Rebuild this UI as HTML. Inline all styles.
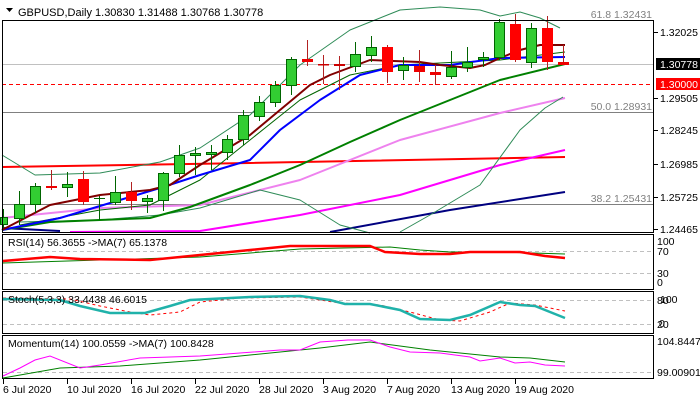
<!DOCTYPE html>
<html><head><meta charset="utf-8"><style>
html,body{margin:0;padding:0;background:#fff;width:700px;height:400px;overflow:hidden}
svg{display:block;font-family:"Liberation Sans",sans-serif;font-size:11px}
</style></head><body>
<svg width="700" height="400" viewBox="0 0 700 400" xmlns="http://www.w3.org/2000/svg">
<rect width="700" height="400" fill="#fff"/>
<path d="M6 8 L13 8 L9.5 12 Z" fill="#000"/>
<text x="18" y="16" fill="#000">GBPUSD,Daily  1.30830 1.31488 1.30768 1.30778</text>
<line x1="2" y1="20.5" x2="654" y2="20.5" fill="none" stroke="#808080"/>
<line x1="2" y1="64.5" x2="654" y2="64.5" stroke="#c0c0c0"/>
<line x1="2" y1="84.5" x2="654" y2="84.5" stroke="#ff0000" stroke-dasharray="4,3"/>
<line x1="2" y1="112.5" x2="654" y2="112.5" stroke="#808080"/>
<line x1="2" y1="204.5" x2="654" y2="204.5" stroke="#808080"/>
<g fill="#808080" font-size="10.5">
<text x="652" y="18" text-anchor="end">61.8 1.32431</text>
<text x="652" y="110" text-anchor="end">50.0 1.28931</text>
<text x="652" y="202" text-anchor="end">38.2 1.25431</text>
</g>
<g fill="none" stroke-linejoin="round">
<polyline stroke="#ff0000" stroke-width="2" points="2,167 250,163 565,157"/>
<polyline stroke="#000080" stroke-width="2" points="2,228 60,231"/>
<polyline stroke="#000080" stroke-width="2" points="330,232 450,210 565,192"/>
<polyline stroke="#ff00ff" stroke-width="2" points="70,232 200,231 300,215 400,195 500,165 565,150"/>
<polyline stroke="#ee82ee" stroke-width="2" points="2,218 100,208 200,205 300,180 400,140 500,113 565,98"/>
<polyline stroke="#2e8b57" stroke-width="1" points="2,155 35,175 100,173 160,162 200,148 250,115 300,65 350,30 400,10 440,7 480,10 500,16 520,12 540,18 560,28"/>
<polyline stroke="#2e8b57" stroke-width="1" points="20,222 100,220 160,215 200,208 260,190 300,200 340,225 370,233"/>
<polyline stroke="#2e8b57" stroke-width="1" points="400,232 430,215 480,185 520,130 545,108 563,97"/>
<polyline stroke="#008000" stroke-width="2" points="2,230 50,222 150,218 190,207 250,185 300,165 350,142 400,120 450,100 500,80 565,64"/>
<polyline stroke="#006400" stroke-width="1" points="20,225 100,210 150,205 200,180 250,140 300,100 350,75 400,65 500,60 565,52"/>
<polyline stroke="#0000ff" stroke-width="2" points="2,230 60,218 120,200 160,188 200,175 250,160 280,130 320,100 360,75 400,65 450,65 500,58 565,57"/>
<polyline stroke="#800000" stroke-width="2" points="2,230 50,205 100,195 150,190 170,185 200,165 250,135 280,110 310,85 330,75 370,60 420,62 440,65 470,68 485,65 500,58 520,50 540,45 565,45"/>
</g>
<g stroke="#006400" stroke-width="1">
<line x1="3.5" y1="209" x2="3.5" y2="228"/><rect x="0.5" y="217.5" width="7" height="7" fill="#32cd32"/>
<line x1="19.5" y1="191" x2="19.5" y2="225"/><rect x="14.5" y="204.5" width="10" height="14" fill="#32cd32"/>
<line x1="35.5" y1="183" x2="35.5" y2="213"/><rect x="30.5" y="186.5" width="10" height="18" fill="#32cd32"/>
<line x1="67.5" y1="172" x2="67.5" y2="197"/><rect x="62.5" y="184.5" width="10" height="3" fill="#32cd32"/>
<line x1="99.5" y1="196" x2="99.5" y2="220"/><line x1="94" y1="198.5" x2="105" y2="198.5"/>
<line x1="115.5" y1="176" x2="115.5" y2="205"/><rect x="110.5" y="192.5" width="10" height="10" fill="#32cd32"/>
<line x1="147.5" y1="195" x2="147.5" y2="213"/><rect x="142.5" y="198.5" width="10" height="3" fill="#32cd32"/>
<line x1="163.5" y1="172" x2="163.5" y2="211"/><rect x="158.5" y="173.5" width="10" height="27" fill="#32cd32"/>
<line x1="179.5" y1="145" x2="179.5" y2="177"/><rect x="174.5" y="155.5" width="10" height="18" fill="#32cd32"/>
<line x1="195.5" y1="147" x2="195.5" y2="175"/><rect x="190.5" y="153.5" width="10" height="2" fill="#32cd32"/>
<line x1="211.5" y1="145" x2="211.5" y2="170"/><rect x="206.5" y="152.5" width="10" height="2" fill="#32cd32"/>
<line x1="227.5" y1="135" x2="227.5" y2="160"/><rect x="222.5" y="139.5" width="10" height="13" fill="#32cd32"/>
<line x1="243.5" y1="110" x2="243.5" y2="145"/><rect x="238.5" y="115.5" width="10" height="24" fill="#32cd32"/>
<line x1="259.5" y1="96" x2="259.5" y2="121"/><rect x="254.5" y="102.5" width="10" height="14" fill="#32cd32"/>
<line x1="275.5" y1="81" x2="275.5" y2="107"/><rect x="270.5" y="85.5" width="10" height="17" fill="#32cd32"/>
<line x1="291.5" y1="57" x2="291.5" y2="95"/><rect x="286.5" y="59.5" width="10" height="26" fill="#32cd32"/>
<line x1="355.5" y1="42" x2="355.5" y2="72"/><rect x="350.5" y="54.5" width="10" height="12" fill="#32cd32"/>
<line x1="371.5" y1="36" x2="371.5" y2="62"/><rect x="366.5" y="47.5" width="10" height="8" fill="#32cd32"/>
<line x1="403.5" y1="57" x2="403.5" y2="80"/><rect x="398.5" y="65.5" width="10" height="5" fill="#32cd32"/>
<line x1="451.5" y1="51" x2="451.5" y2="79"/><rect x="446.5" y="67.5" width="10" height="9" fill="#32cd32"/>
<line x1="467.5" y1="47" x2="467.5" y2="72"/><rect x="462.5" y="62.5" width="10" height="5" fill="#32cd32"/>
<line x1="483.5" y1="52" x2="483.5" y2="67"/><rect x="478.5" y="57.5" width="10" height="2" fill="#32cd32"/>
<line x1="499.5" y1="19" x2="499.5" y2="60"/><rect x="494.5" y="22.5" width="10" height="35" fill="#32cd32"/>
<line x1="531.5" y1="23" x2="531.5" y2="68"/><rect x="526.5" y="28.5" width="10" height="34" fill="#32cd32"/>
</g>
<g stroke="#b22222" stroke-width="1">
<line x1="51.5" y1="170" x2="51.5" y2="190"/><rect x="46" y="186" width="11" height="2" fill="#e00" stroke="none"/>
<line x1="83.5" y1="171" x2="83.5" y2="205"/><rect x="78" y="179" width="11" height="23" fill="#f00" stroke="none"/>
<line x1="131.5" y1="182" x2="131.5" y2="210"/><rect x="126" y="192" width="11" height="9" fill="#f00" stroke="none"/>
<line x1="307.5" y1="40" x2="307.5" y2="66"/><rect x="302" y="59" width="11" height="3" fill="#e00" stroke="none"/>
<line x1="323.5" y1="55" x2="323.5" y2="84"/><rect x="318" y="64" width="11" height="1.5" fill="#c00" stroke="none"/>
<line x1="339.5" y1="56" x2="339.5" y2="90"/><rect x="334" y="64" width="11" height="2" fill="#c00" stroke="none"/>
<line x1="387.5" y1="45" x2="387.5" y2="83"/><rect x="382" y="47" width="11" height="25" fill="#f00" stroke="none"/>
<line x1="419.5" y1="50" x2="419.5" y2="82"/><rect x="414" y="66" width="11" height="6" fill="#e00" stroke="none"/>
<line x1="435.5" y1="65" x2="435.5" y2="85"/><rect x="430" y="72" width="11" height="3" fill="#e00" stroke="none"/>
<line x1="515.5" y1="14" x2="515.5" y2="62"/><rect x="510" y="24" width="11" height="36" fill="#f00" stroke="none"/>
<line x1="547.5" y1="16" x2="547.5" y2="70"/><rect x="542" y="28" width="11" height="34" fill="#f00" stroke="none"/>
<line x1="563.5" y1="45" x2="563.5" y2="65"/><rect x="558" y="62" width="11" height="3" fill="#e00" stroke="none"/>
</g>
<g fill="none" stroke="#000" stroke-width="1">
<rect x="2.5" y="20.5" width="651" height="212"/>
<rect x="2.5" y="234.5" width="651" height="55"/>
<rect x="2.5" y="291.5" width="651" height="42"/>
<rect x="2.5" y="335.5" width="651" height="43"/>
</g>
<g stroke="#c0c0c0" stroke-dasharray="4,3"><line x1="3" y1="251.5" x2="653" y2="251.5"/><line x1="3" y1="273.5" x2="653" y2="273.5"/>
<line x1="3" y1="300.5" x2="653" y2="300.5"/><line x1="3" y1="324.5" x2="653" y2="324.5"/><line x1="3" y1="372.5" x2="653" y2="372.5"/></g>
<g fill="none">
<polyline stroke="#008000" stroke-width="1" points="3,263 100,260 200,257 300,249 390,247 420,250 450,252 500,252 565,254"/>
<polyline stroke="#ff0000" stroke-width="2.5" points="3,261 50,257 80,259 150,260 200,255 250,250 290,246 370,246 385,252 420,254 450,254 470,252 500,252 520,252 545,256 565,258"/>
<polyline stroke="#ff0000" stroke-width="1" stroke-dasharray="3,3" points="3,298 70,299 100,306 130,312 150,315 180,312 200,302 240,298 300,297 340,303 380,305 410,312 440,320 460,321 490,312 510,303 535,305 560,310 565,311"/>
<polyline stroke="#20b2aa" stroke-width="2.5" points="3,299 60,300 80,306 110,313 145,313 170,306 190,300 250,297 300,296 330,300 345,304 370,304 400,310 420,319 450,320 470,315 500,302 520,305 535,306 550,312 565,318"/>
<polyline stroke="#008000" stroke-width="1" points="3,378 60,368 120,366 200,360 250,355 320,348 370,342 400,346 430,350 470,354 500,357 530,358 565,362"/>
<polyline stroke="#ff00ff" stroke-width="1" points="3,376 20,368 35,360 50,356 80,368 100,365 140,358 200,356 280,350 300,350 320,342 348,340 370,340 390,347 410,352 440,353 470,357 480,361 500,358 515,363 530,362 545,365 565,366"/>
</g>
<g fill="#000" font-size="10.5">
<text x="8" y="246">RSI(14) 56.3655  -&gt;MA(7) 65.1378</text>
<text x="8" y="303">Stoch(5,3,3) 33.4438 46.6015</text>
<text x="8" y="347">Momentum(14) 100.0559  -&gt;MA(7) 100.8428</text>
</g>
<g fill="#000" font-size="10.5">
<text x="660" y="36">1.32025</text>
<text x="660" y="102">1.29505</text>
<text x="660" y="134">1.28245</text>
<text x="660" y="168">1.26985</text>
<text x="660" y="201">1.25725</text>
<text x="660" y="233">1.24465</text>
<text x="657" y="245">100</text><text x="657" y="255">70</text><text x="657" y="277">30</text><text x="657" y="286">0</text>
<text x="657" y="304">80</text><text x="660" y="303">100</text><text x="657" y="328">20</text><text x="659" y="327">0</text>
<text x="657" y="345">104.8447</text><text x="657" y="376">99.00901</text>
</g>
<rect x="656" y="58" width="44" height="12" fill="#000"/>
<text x="660" y="68" fill="#fff" font-size="10.5">1.30778</text>
<rect x="656" y="78" width="44" height="12" fill="#f00"/>
<text x="660" y="88" fill="#fff" font-size="10.5">1.30000</text>
<g stroke="#000"><line x1="654" y1="32.5" x2="658" y2="32.5"/><line x1="654" y1="98.5" x2="658" y2="98.5"/><line x1="654" y1="130.5" x2="658" y2="130.5"/><line x1="654" y1="164.5" x2="658" y2="164.5"/><line x1="654" y1="197.5" x2="658" y2="197.5"/><line x1="654" y1="229.5" x2="658" y2="229.5"/></g>
<g stroke="#000"><line x1="3.5" y1="379" x2="3.5" y2="384"/><line x1="67.5" y1="379" x2="67.5" y2="384"/><line x1="131.5" y1="379" x2="131.5" y2="384"/><line x1="195.5" y1="379" x2="195.5" y2="384"/><line x1="259.5" y1="379" x2="259.5" y2="384"/><line x1="323.5" y1="379" x2="323.5" y2="384"/><line x1="387.5" y1="379" x2="387.5" y2="384"/><line x1="451.5" y1="379" x2="451.5" y2="384"/><line x1="515.5" y1="379" x2="515.5" y2="384"/></g>
<g fill="#000" font-size="10.5">
<text x="3" y="393">6 Jul 2020</text>
<text x="67" y="393">10 Jul 2020</text>
<text x="131" y="393">16 Jul 2020</text>
<text x="195" y="393">22 Jul 2020</text>
<text x="259" y="393">28 Jul 2020</text>
<text x="323" y="393">3 Aug 2020</text>
<text x="387" y="393">7 Aug 2020</text>
<text x="451" y="393">13 Aug 2020</text>
<text x="515" y="393">19 Aug 2020</text>
</g>
</svg>
</body></html>
